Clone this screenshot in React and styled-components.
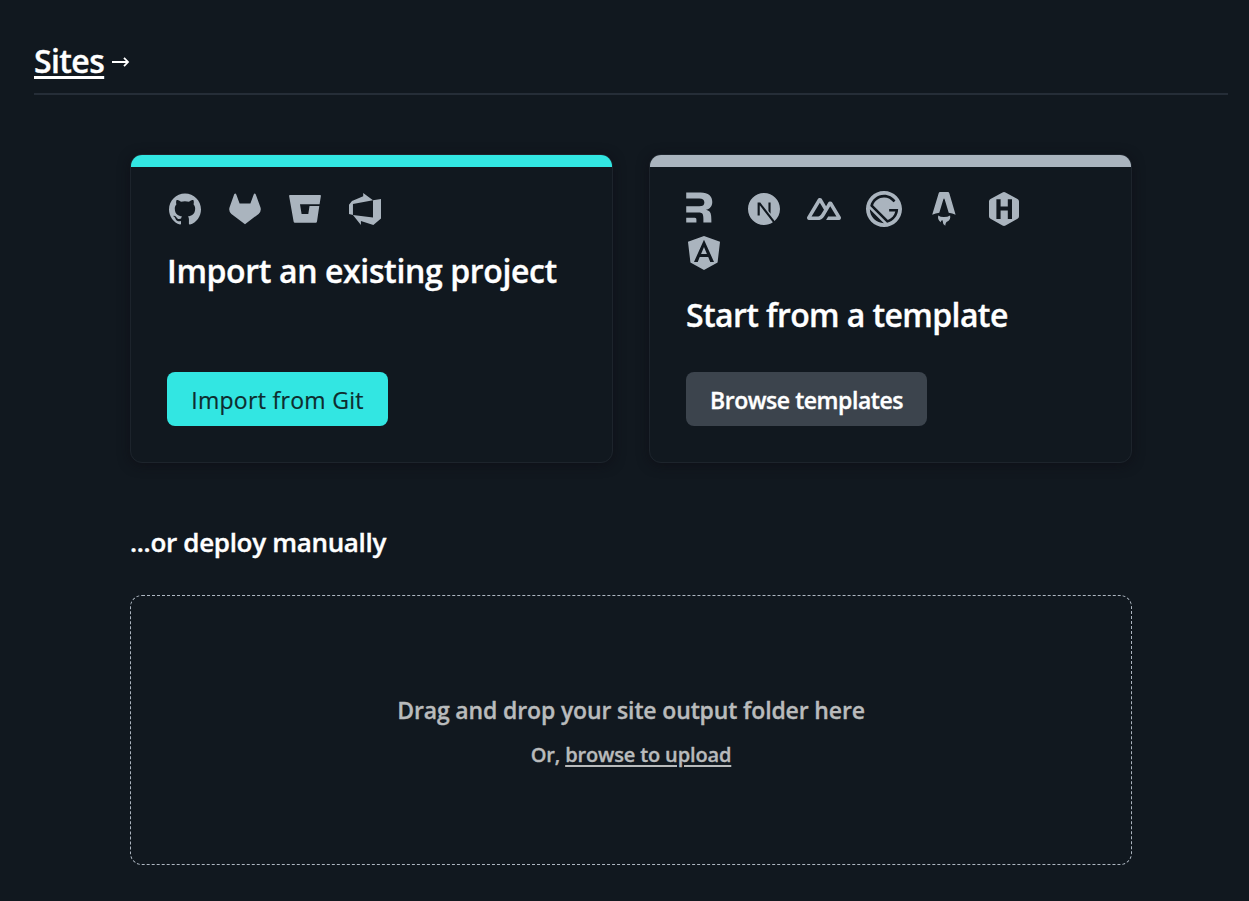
import React from 'react';
import styled, { createGlobalStyle } from 'styled-components';
import { SiGithub, SiGatsby } from 'react-icons/si';

const Global = createGlobalStyle`
  * { box-sizing: border-box; }
  body {
    margin: 0;
    background: #11181f;
    color: #fff;
    font-family: "Open Sans", "Noto Sans", sans-serif;
    font-weight: 600;
    -webkit-text-stroke: 0.35px currentColor;
  }
  h1, h2, h3, p { margin: 0; font-weight: 600; white-space: nowrap; }
`;

const Page = styled.div`
  height: 901px;
  padding: 36px 21px 0 34px;
`;
const Header = styled.header`
  display: flex;
  align-items: center;
  gap: 6px;
  height: 59px;
  padding-bottom: 8px;
  border-bottom: 2px solid #252d37;
`;
const SitesLink = styled.a`
  font-size: 32px;
  line-height: 44px;
  letter-spacing: ${(p) => p.$track}px;
  color: #fff;
  text-decoration: underline;
  text-decoration-thickness: 3px;
  text-underline-offset: 3px;
`;
const Arrow = styled.svg`
  width: 20px;
  height: 12px;
  margin-top: 2px;
  fill: none;
  stroke: #fff;
  stroke-width: 1.8;
`;
const Main = styled.main`
  width: 1002px;
  margin: 59px 0 0 96px;
`;
const Cards = styled.div`
  display: grid;
  grid-template-columns: 1fr 1fr;
  gap: 36px;
`;
const Card = styled.section`
  height: 309px;
  border: 1px solid #1d242c;
  border-radius: 12px;
  overflow: hidden;
  box-shadow: 0 2px 12px rgba(14, 12, 20, 0.65);
  display: flex;
  flex-direction: column;
  align-items: flex-start;
  padding: 0 36px 36px;
  &::before {
    content: "";
    height: 12px;
    flex: none;
    align-self: stretch;
    margin: 0 -36px;
    background: ${(p) => p.$accent};
  }
`;
const Icons = styled.div`
  display: flex;
  flex-wrap: wrap;
  gap: 8px 24px;
  max-width: 384px;
  margin-top: 24px;
  color: #aab4be;
`;
const IconSlot = styled.span`
  width: 36px;
  height: 36px;
  display: flex;
  align-items: center;
  justify-content: ${(p) => (p.$start ? 'flex-start' : 'center')};
  svg {
    display: block;
    flex: none;
    width: ${(p) => p.$size || 32}px;
    height: ${(p) => p.$size || 32}px;
    fill: currentColor;
    overflow: visible;
  }
`;
const CardTitle = styled.h2`
  margin-top: 21px;
  font-size: 32px;
  line-height: 46px;
  letter-spacing: ${(p) => p.$track}px;
`;
const Button = styled.button`
  margin-top: auto;
  width: ${(p) => p.$width}px;
  height: 54px;
  flex: none;
  padding: 1px 0 0;
  border: 0;
  border-radius: 8px;
  background: ${(p) => (p.$primary ? '#32e6e2' : '#3c444d')};
  color: ${(p) => (p.$primary ? '#0e2c2e' : '#fff')};
  font: ${(p) => (p.$primary ? 500 : 600)} 23px/32px "Open Sans", "Noto Sans", sans-serif;
  letter-spacing: ${(p) => p.$track}px;
  -webkit-text-stroke: ${(p) => (p.$primary ? 0.2 : 0.35)}px currentColor;
  white-space: nowrap;
`;
const ManualTitle = styled.h3`
  margin-top: 60px;
  font-size: 26px;
  line-height: 38px;
  letter-spacing: ${(p) => p.$track}px;
`;
const DropZone = styled.div`
  margin-top: 34px;
  height: 270px;
  padding-top: 4px;
  border: 1px dashed #adb6c0;
  border-radius: 12px;
  display: flex;
  flex-direction: column;
  align-items: center;
  justify-content: center;
  gap: 13px;
  color: #b9bbbc;
`;
const DropText = styled.p`
  font-size: ${(p) => p.$size}px;
  line-height: 32px;
  letter-spacing: ${(p) => p.$track}px;
`;
const Browse = styled.a`
  text-decoration: underline;
  text-decoration-thickness: 2px;
  text-underline-offset: 3px;
`;

const Glyph = ({ d, box = '0 0 24 24' }) => (
  <svg viewBox={box}><path fillRule="evenodd" d={d} /></svg>
);

const GITLAB = 'M5.2 1.2Q6.4-.2 7.3 1.4L10.6 10.5H21.4L24.7 1.4Q25.6-.2 26.8 1.4L31.5 14.5Q32.6 18.4 29.6 20.9L16 31.2L2.4 20.9Q-.6 18.4.5 14.5Z';
const BITBUCKET = 'M.9 2H31.1Q32.1 2 31.9 3.1L30.6 11.2H11L12.6 21H19.3L20.5 13H30.3L28 28.6Q27.8 29.8 26.7 29.8H5.9Q4.8 29.8 4.6 28.6L.1 3.1Q0 2 .9 2Z';
const AZURE = 'M0 8.877L2.247 5.91l8.405-3.416V.022l7.37 5.393L2.966 8.338v8.225L0 15.707zm24-4.45v14.651l-5.753 4.9-9.303-3.057v3.056l-5.978-7.416 15.057 1.798V5.415z';
const REMIX = 'M21.511 18.508c.216 2.773.216 4.073.216 5.492H15.31c0-.309.006-.592.011-.878.018-.892.036-1.821-.109-3.698-.19-2.747-1.374-3.358-3.55-3.358H1.574v-5h10.396c2.748 0 4.122-.835 4.122-3.049 0-1.946-1.374-3.125-4.122-3.125H1.573V0h11.541c6.221 0 9.313 2.938 9.313 7.632 0 3.511-2.176 5.8-5.114 6.182 2.48.497 3.93 1.909 4.198 4.694ZM1.573 24v-3.727h6.784c1.133 0 1.379.84 1.379 1.342V24Z';
const NEXT = 'M18.665 21.978C16.758 23.255 14.465 24 12 24 5.377 24 0 18.623 0 12S5.377 0 12 0s12 5.377 12 12c0 3.583-1.574 6.801-4.067 9.001L9.219 7.2H7.2v9.596h1.615V9.251l9.85 12.727Zm-3.332-8.533 1.6 2.061V7.2h-1.6v6.245Z';
const NUXT = 'M13.4642 19.8295h8.9218c.2834 0 .5618-.0723.8072-.2098a1.5899 1.5899 0 0 0 .5908-.5732 1.5293 1.5293 0 0 0 .216-.783 1.529 1.529 0 0 0-.2167-.7828L17.7916 7.4142a1.59 1.59 0 0 0-.5907-.573 1.6524 1.6524 0 0 0-.807-.2099c-.2833 0-.5616.0724-.807.2098a1.59 1.59 0 0 0-.5907.5731L13.4642 9.99l-2.9954-5.0366a1.5913 1.5913 0 0 0-.591-.573 1.6533 1.6533 0 0 0-.8071-.2098c-.2834 0-.5617.0723-.8072.2097a1.5913 1.5913 0 0 0-.591.573L.2168 17.4808A1.5292 1.5292 0 0 0 0 18.2635c-.0001.2749.0744.545.216.783a1.59 1.59 0 0 0 .5908.5732c.2454.1375.5238.2098.8072.2098h5.6003c2.219 0 3.8554-.9454 4.9813-2.7899l2.7337-4.5922L16.3935 9.99l4.3944 7.382h-5.8586ZM7.123 17.3694l-3.9083-.0009 5.8586-9.8421 2.9232 4.921-1.9572 3.2892c-.7478 1.1967-1.5972 1.6328-2.9163 1.6328z';
const ASTRO = 'M12.6 2.4Q12.9 1 14.2 1H21.8Q23.1 1 23.4 2.4L29.6 23.8Q26.4 22.2 22.7 21.8L18.7 8.4Q18 6.6 17.3 8.4L13.3 21.8Q9.6 22.2 6.2 23.8ZM12.2 24.4Q14.5 26.2 18 26.1Q21.6 26.1 24.1 24.4Q25 28.6 21.4 30.4Q19.4 31.2 19.3 34.8Q16.6 33.4 16.8 30.6Q16.9 28.9 15.6 29.4Q14.7 29.8 14.9 31.2Q11.4 28.8 12.2 24.4Z';
const HUGO = 'M14.5.4Q16 -.4 17.5.4L29.5 7Q31 7.9 31 9.6V24.2Q31 25.9 29.5 26.8L17.5 33.5Q16 34.3 14.5 33.5L2.5 26.8Q1 25.9 1 24.2V9.6Q1 7.9 2.5 7ZM8.4 7.2V27H12.6V18.6H19.8V27H24V7.2H19.8V14.4H12.6V7.2Z';
const ANGULAR = 'M9.93 12.645h4.134L11.996 7.74M11.996.009L.686 3.988l1.725 14.76 9.585 5.243 9.588-5.238L23.308 3.99 11.996.01zm7.058 18.297h-2.636l-1.42-3.501H8.995l-1.42 3.501H4.937l7.06-15.648 7.057 15.648z';

export default function App() {
  return (
    <>
      <Global />
      <Page>
        <Header>
          <SitesLink $track={-0.6}>Sites</SitesLink>
          <Arrow viewBox="0 0 20 12"><path d="M2 6H18M14 1.8L18 6L14 10.2" /></Arrow>
        </Header>
        <Main>
          <Cards>
            <Card $accent="#32e6e2">
              <Icons>
                <IconSlot><SiGithub /></IconSlot>
                <IconSlot><Glyph d={GITLAB} box="0 0 32 32" /></IconSlot>
                <IconSlot><Glyph d={BITBUCKET} box="0 0 32 32" /></IconSlot>
                <IconSlot><Glyph d={AZURE} /></IconSlot>
              </Icons>
              <CardTitle $track={-0.37}>Import an existing project</CardTitle>
              <Button $primary $width={221} $track={0.3}>Import from Git</Button>
            </Card>
            <Card $accent="#aab4be">
              <Icons>
                <IconSlot $start $size={30}><Glyph d={REMIX} box="1.4 1.2 24 24" /></IconSlot>
                <IconSlot><Glyph d={NEXT} /></IconSlot>
                <IconSlot $size={34}><Glyph d={NUXT} /></IconSlot>
                <IconSlot $size={36}><SiGatsby /></IconSlot>
                <IconSlot $size={36}><Glyph d={ASTRO} box="0 0 36 36" /></IconSlot>
                <IconSlot $size={34}><Glyph d={HUGO} box="-1 0 34 34" /></IconSlot>
                <IconSlot $size={34}><Glyph d={ANGULAR} /></IconSlot>
              </Icons>
              <CardTitle $track={-0.6}>Start from a template</CardTitle>
              <Button $width={241} $track={-0.45}>Browse templates</Button>
            </Card>
          </Cards>
          <ManualTitle $track={-0.32}>...or deploy manually</ManualTitle>
          <DropZone>
            <DropText $size={23} $track={-0.14}>Drag and drop your site output folder here</DropText>
            <DropText $size={20} $track={-0.14}>Or, <Browse>browse to upload</Browse></DropText>
          </DropZone>
        </Main>
      </Page>
    </>
  );
}
